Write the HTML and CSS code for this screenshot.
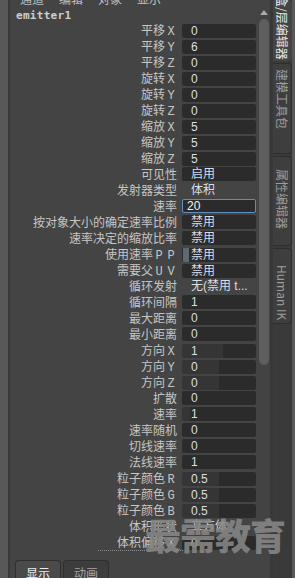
FILE: index.html
```html
<!DOCTYPE html>
<html lang="zh-CN">
<head>
    <meta charset="UTF-8">
    <meta name="viewport" content="width=device-width, initial-scale=1.0">
    <title>通道盒</title>
    <link rel="stylesheet" href="styles.css">
</head>
<body>
    <div class="app">
        <div class="edge-l"></div>

        <div class="content">
            <div class="menubar">
                <span>通道</span><span>编辑</span><span>对象</span><span>显示</span>
            </div>

            <div class="view">
                <div class="attrs">
                    <div class="title">emitter1</div>

                    <div class="row"><span class="label">平移<span class="axis">X</span></span><span class="field">0</span></div>
                    <div class="row"><span class="label">平移<span class="axis">Y</span></span><span class="field">6</span></div>
                    <div class="row"><span class="label">平移<span class="axis">Z</span></span><span class="field">0</span></div>
                    <div class="row"><span class="label">旋转<span class="axis">X</span></span><span class="field">0</span></div>
                    <div class="row"><span class="label">旋转<span class="axis">Y</span></span><span class="field">0</span></div>
                    <div class="row"><span class="label">旋转<span class="axis">Z</span></span><span class="field">0</span></div>
                    <div class="row"><span class="label">缩放<span class="axis">X</span></span><span class="field">5</span></div>
                    <div class="row"><span class="label">缩放<span class="axis">Y</span></span><span class="field">5</span></div>
                    <div class="row"><span class="label">缩放<span class="axis">Z</span></span><span class="field">5</span></div>
                    <div class="row"><span class="label">可见性</span><span class="field">启用</span></div>
                    <div class="row"><span class="label">发射器类型</span><span class="field enum">体积</span></div>
                    <div class="row"><span class="label">速率</span><span class="field focus">20</span></div>
                    <div class="row"><span class="label">按对象大小的确定速率比例</span><span class="field">禁用</span></div>
                    <div class="row"><span class="label">速率决定的缩放比率</span><span class="field">禁用</span></div>
                    <div class="row"><span class="label">使用速率<span class="axis">PP</span></span><span class="field"><span class="mark"></span>禁用</span></div>
                    <div class="row"><span class="label">需要父<span class="axis">UV</span></span><span class="field">禁用</span></div>
                    <div class="row"><span class="label">循环发射</span><span class="field enum">无(禁用 t...</span></div>
                    <div class="row"><span class="label">循环间隔</span><span class="field">1</span></div>
                    <div class="row"><span class="label">最大距离</span><span class="field">0</span></div>
                    <div class="row"><span class="label">最小距离</span><span class="field">0</span></div>
                    <div class="row"><span class="label">方向<span class="axis">X</span></span><span class="field slider" style="--fill: 41px">1</span></div>
                    <div class="row"><span class="label">方向<span class="axis">Y</span></span><span class="field slider" style="--fill: 37px">0</span></div>
                    <div class="row"><span class="label">方向<span class="axis">Z</span></span><span class="field slider" style="--fill: 37px">0</span></div>
                    <div class="row"><span class="label">扩散</span><span class="field">0</span></div>
                    <div class="row"><span class="label">速率</span><span class="field slider" style="--fill: 8px">1</span></div>
                    <div class="row"><span class="label">速率随机</span><span class="field">0</span></div>
                    <div class="row"><span class="label">切线速率</span><span class="field">0</span></div>
                    <div class="row"><span class="label">法线速率</span><span class="field">1</span></div>
                    <div class="row"><span class="label">粒子颜色<span class="axis">R</span></span><span class="field slider" style="--fill: 37px">0.5</span></div>
                    <div class="row"><span class="label">粒子颜色<span class="axis">G</span></span><span class="field slider" style="--fill: 37px">0.5</span></div>
                    <div class="row"><span class="label">粒子颜色<span class="axis">B</span></span><span class="field slider" style="--fill: 37px">0.5</span></div>
                    <div class="row"><span class="label">体积形状</span><span class="field enum">立方体</span></div>
                    <div class="row"><span class="label">体积偏移<span class="axis">X</span></span><span class="field">0</span></div>
                </div>

                <div class="scroll">
                    <div class="arrow"></div>
                    <div class="thumb"></div>
                </div>
            </div>

            <div class="foot">
                <div class="dots"></div>
                <div class="tabbar">
                    <div class="btab on">显示</div>
                    <div class="btab">动画</div>
                </div>
            </div>
        </div>

        <div class="gutter"></div>

        <div class="tabs">
            <div class="vtab on"><span>通道盒/层编辑器</span></div>
            <div class="vtab t2"><span>建模工具包</span></div>
            <div class="vtab t3"><span>属性编辑器</span></div>
            <div class="vtab t4"><span>Human IK</span></div>
        </div>

        <div class="edge-r"></div>
    </div>

    <div class="watermark">最需教育</div>
</body>
</html>
```

FILE: styles.css
```css
* {
    margin: 0;
    padding: 0;
    box-sizing: border-box;
}
body {
    position: relative;
    width: 295px;
    height: 578px;
    overflow: hidden;
    background-color: #444444;
    font-family: "Noto Sans CJK SC", "Liberation Sans", sans-serif;
    font-size: 12px;
    color: #c6c6c6;
}
.app {
    display: flex;
    height: 578px;
}
.edge-l {
    width: 10px;
    background-color: #585858;
    border-right: 2px solid #393939;
}
.edge-r {
    width: 3px;
    background-color: #585858;
}
.content {
    width: 260px;
    display: flex;
    flex-direction: column;
}
.menubar {
    height: 10px;
    overflow: hidden;
    display: flex;
    gap: 15px;
    padding-left: 10px;
    color: #bdbdbd;
}
.menubar span {
    line-height: 12px;
    margin-top: -7px;
}
.view {
    display: flex;
    height: 543px;
}
.attrs {
    flex: 1;
    overflow: hidden;
}
.title {
    height: 15px;
    padding: 2px 0 0 6px;
    font-family: "DejaVu Sans Mono", monospace;
    font-weight: bold;
    font-size: 11px;
    line-height: 13px;
    letter-spacing: 0.3px;
    color: #cfcfcf;
}
.row {
    display: grid;
    grid-template-columns: 1fr 74px;
    column-gap: 5px;
    align-items: center;
    height: 16px;
    padding-right: 1px;
}
.label {
    text-align: right;
    line-height: 16px;
    white-space: nowrap;
}
.axis {
    font-family: "Liberation Mono", monospace;
    font-size: 12px;
    letter-spacing: 4.8px;
    padding-left: 2.4px;
    margin-right: -2.4px;
}
.field {
    display: flex;
    align-items: center;
    height: 14px;
    padding-left: 9px;
    overflow: hidden;
    white-space: nowrap;
    background-color: #2b2b2b;
    border-radius: 2px;
    font-family: "Liberation Sans", "Noto Sans CJK SC", sans-serif;
    line-height: 14px;
    color: #d9dee4;
}
.field.enum {
    background: none;
}
.field.focus {
    padding-left: 4px;
    border: 1px solid #5b8fbf;
    color: #f2f2f2;
}
.field.slider {
    background: linear-gradient(to right, #353535 var(--fill), #2b2b2b var(--fill));
}
.mark {
    width: 6px;
    height: 14px;
    margin-left: -8px;
    margin-right: 2px;
    background-color: #5e6976;
}
.scroll {
    width: 13px;
    display: flex;
    flex-direction: column;
    align-items: center;
    background-color: #434343;
}
.arrow {
    width: 0;
    height: 0;
    margin-top: 3px;
    border-left: 4.5px solid transparent;
    border-right: 4.5px solid transparent;
    border-bottom: 5px solid #a9a9a9;
}
.thumb {
    width: 10px;
    height: 346px;
    margin-top: 4px;
    background-color: #5e5e5e;
    border-radius: 5px;
}
.foot {
    flex: 1;
}
.dots {
    width: 85px;
    margin-left: 88px;
    border-top: 1px dotted #8c8c8c;
}
.tabbar {
    display: flex;
    gap: 2px;
    margin-top: 9px;
    padding-left: 5px;
}
.btab {
    width: 46px;
    height: 18px;
    padding-top: 3px;
    text-align: center;
    line-height: 18px;
    background-color: #3d3d3d;
    border: 1px solid #2f2f2f;
    border-bottom: none;
    border-radius: 4px 4px 0 0;
    color: #a4a4a4;
}
.btab.on {
    background-color: #4a4a4a;
    color: #ededed;
}
.gutter {
    width: 3px;
    background-color: #383838;
}
.tabs {
    width: 19px;
    display: flex;
    flex-direction: column;
    gap: 2px;
    background-color: #3a3a3a;
}
.vtab {
    display: flex;
    flex-direction: column;
    align-items: center;
    overflow: hidden;
    background-color: #3e3e3e;
    border: 1px solid #2e2e2e;
    border-left: none;
    border-radius: 0 4px 4px 0;
    color: #9d9d9d;
}
.vtab span {
    writing-mode: vertical-rl;
    text-orientation: sideways;
    line-height: 17px;
    white-space: nowrap;
}
.vtab.on {
    height: 61px;
    justify-content: flex-end;
    padding-bottom: 1px;
    background-color: #444444;
    border: none;
    color: #e8e8e8;
}
.vtab.t2 {
    height: 91px;
    padding-top: 5px;
}
.vtab.t3 {
    height: 90px;
    padding-top: 12px;
}
.vtab.t4 {
    height: 76px;
    padding-top: 16px;
}
.watermark {
    position: absolute;
    left: 145px;
    top: 514px;
    font-size: 36px;
    font-weight: 900;
    line-height: 40px;
    letter-spacing: -1px;
    color: rgba(135, 135, 135, 0.88);
}
```
